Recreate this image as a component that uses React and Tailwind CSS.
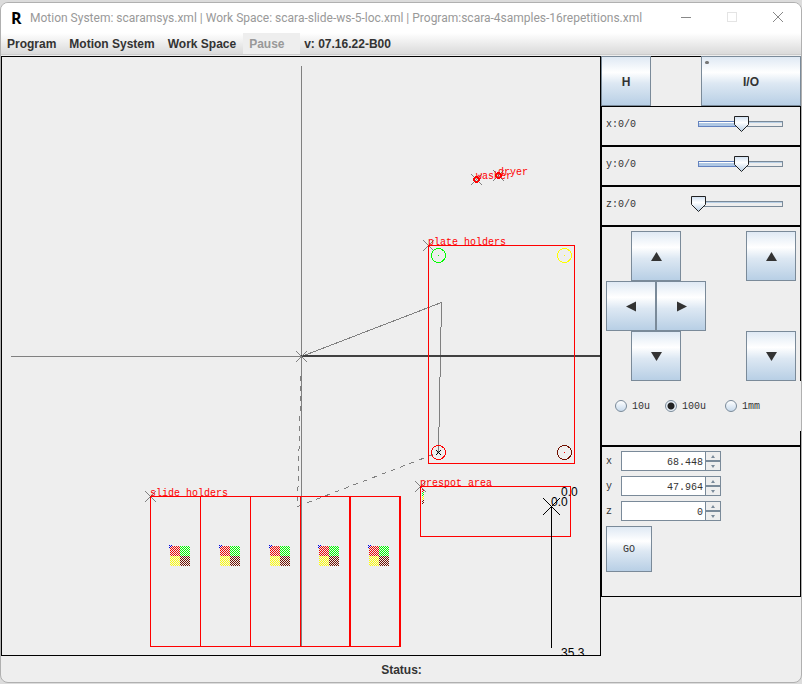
import React, { useState } from "react";

const MONO = "font-['Liberation_Mono',monospace] text-[10px] leading-3";
const BUTTON =
  "flex items-center justify-center border border-[#7a8a99] bg-[linear-gradient(#dfe9f4,#ffffff_32%,#dde8f3_55%,#b8cfe5)] text-[#333]";

function TitleBar() {
  return (
    <header className="flex h-[30px] items-center bg-white pl-[10px] pr-[17px]">
      <span className="w-[19px] font-['Open_Sans',sans-serif] text-base leading-5 font-bold text-black">R</span>
      <h1 className="flex-1 truncate font-['Roboto',sans-serif] text-xs text-[#999]">
        Motion System: scaramsys.xml | Work Space: scara-slide-ws-5-loc.xml | Program:scara-4samples-16repetitions.xml
      </h1>
      <div className="flex items-center gap-[34px]">
        <button type="button" aria-label="Minimize">
          <svg width="12" height="12" stroke="#888" fill="none"><path d="M1 5.500H11" /></svg>
        </button>
        <button type="button" aria-label="Maximize" disabled>
          <svg width="12" height="12" stroke="#e4e4e4" fill="none"><rect x="1.500" y="0.500" width="9" height="9" /></svg>
        </button>
        <button type="button" aria-label="Close">
          <svg width="12" height="12" stroke="#888" fill="none"><path d="M1 0L11 10M11 0L1 10" /></svg>
        </button>
      </div>
    </header>
  );
}

function MenuBar() {
  return (
    <nav className="flex h-[22px] items-stretch border-b border-[#ccc] bg-linear-to-b from-white to-[#dadada] text-xs font-bold text-[#333]">
      <button type="button" className="px-[6px]">Program</button>
      <button type="button" className="px-[7px]">Motion System</button>
      <button type="button" className="px-[6px]">Work Space</button>
      <button type="button" disabled className="ml-px w-[57px] bg-[#eee] pl-[6px] text-left text-[#999]">Pause</button>
      <span className="flex items-center pl-1">v: 07.16.22-B00</span>
    </nav>
  );
}

function Mark({ x, y, r = 5, color = "#808080" }) {
  return (
    <path
      d={`M${x - r} ${y - r}L${x + r} ${y + r}M${x + r} ${y - r}L${x - r} ${y + r}`}
      stroke={color}
      strokeLinecap="square"
      fill="none"
    />
  );
}

const SPOTS = [
  { id: "red", color: "#ee0000", dx: 0, dy: 0 },
  { id: "green", color: "#00ff00", dx: 10, dy: 0 },
  { id: "yellow", color: "#ffff00", dx: 0, dy: 10 },
  { id: "brown", color: "#701000", dx: 10, dy: 10 },
];

function Workspace() {
  return (
    <svg
      viewBox="2 57 598 598"
      className="block h-auto w-full"
      shapeRendering="crispEdges"
      role="img"
      aria-label="Work space"
    >
      <defs>
        {SPOTS.map((s) => (
          <pattern key={s.id} id={s.id} width="2" height="2" patternUnits="userSpaceOnUse">
            <rect width="1" height="1" fill={s.color} />
            <rect x="1" y="1" width="1" height="1" fill={s.color} />
          </pattern>
        ))}
      </defs>
      {[170, 220, 270, 319, 369].map((x) => (
        <g key={x} transform={`translate(${x} 546)`}>
          {SPOTS.map((s) => (
            <rect key={s.id} x={s.dx} y={s.dy} width="10" height="10" fill={`url(#${s.id})`} />
          ))}
          <path d="M-1 -1h1v1h-1zM1 -1h1v1h-1zM-1 1h1v1h-1zM0 0h1v1h-1z" fill="#0000e0" />
        </g>
      ))}
      <g transform="translate(422 489)">
        <rect width="2" height="3" fill="url(#red)" />
        <rect y="3" width="2" height="4" fill="url(#green)" />
        <rect y="7" width="2" height="4" fill="url(#yellow)" />
        <rect y="11" width="2" height="4" fill="url(#brown)" />
      </g>
      <g transform="translate(.5 .5)" fill="none">
        <g stroke="#808080">
          <path d="M301 65.500V646M10.500 356H301" />
          <path d="M301 356L441 302L438 452" />
          <path d="M301 356L297 506L438 452" strokeDasharray="5 5" />
        </g>
        <path d="M300 355.500H600" stroke="#404040" strokeWidth="2" />
        <Mark x={301} y={356} />
        <Mark x={150} y={496} />
        <Mark x={476} y={179} />
        <Mark x={498} y={175} />
        <Mark x={428} y={245} />
        <Mark x={420} y={486} />
        <g stroke="#ff0000">
          <rect x="428" y="245" width="146" height="218" />
          <rect x="420" y="486" width="150" height="50" />
          <path d="M150 496H400V646H150ZM200 496V646M250 496V646M300 496V646M349 496V646M350 496V646M399 496V646" />
          <circle cx="476" cy="179" r="2.700" strokeWidth="1.500" />
          <circle cx="498" cy="175" r="2.700" strokeWidth="1.500" />
          <circle cx="438" cy="452" r="7" />
        </g>
        <circle cx="438" cy="255" r="7" stroke="#00ff00" />
        <circle cx="564" cy="255" r="7" stroke="#ffff00" />
        <circle cx="564" cy="452" r="7" stroke="#701000" />
        <path d="M438 254.500v1" stroke="#00ff00" />
        <path d="M564 254.500v1" stroke="#ffff00" />
        <path d="M564 451.500v1" stroke="#ff0000" />
        <Mark x={438} y={452} r={2} color="#000" />
        <Mark x={551} y={506} r={8} color="#000" />
        <path d="M551 506V647" stroke="#000" />
      </g>
      <g fill="#ff0000" className="font-['Liberation_Mono',monospace] text-[10px]">
        <text x="476" y="179">washer</text>
        <text x="498" y="175">dryer</text>
        <text x="428" y="245">plate holders</text>
        <text x="420" y="486">prespot area</text>
        <text x="150" y="496">slide holders</text>
      </g>
      <g fill="#000" className="font-['Liberation_Sans',sans-serif] text-xs">
        <text x="561" y="496">0.0</text>
        <text x="551" y="506">0.0</text>
        <text x="561" y="657">35.3</text>
      </g>
    </svg>
  );
}

function AxisSlider({ axis, initial }) {
  const [value, setValue] = useState(initial);
  const at = 7 + Math.round(value * 0.86);
  return (
    <label className="flex h-10 items-center border border-black pr-[9px] pl-1">
      <span className={`${MONO} flex-1 pb-[2px]`}>{axis}:0/0</span>
      <span className="relative mb-1 block h-4 w-[100px]">
        <svg width="100" height="16" className="block">
          <defs>
            <linearGradient id={`thumb-${axis}`} x2="0" y2="1">
              <stop offset="0" stopColor="#cfe0f2" />
              <stop offset=".4" stopColor="#fff" />
              <stop offset="1" stopColor="#b8cfe5" />
            </linearGradient>
          </defs>
          <rect x="7.500" y="5.500" width="84" height="5" fill="#eee" stroke="#7a8a99" />
          <path d="M8 6.500H91" stroke="#b8cfe5" />
          {value > 0 && (
            <>
              <rect x="7.500" y="5.500" width={at - 7} height="5" fill="#b0c8e4" stroke="#6382bf" />
              <path d={`M8 6.500H${at}`} stroke="#fff" />
            </>
          )}
          <path
            d={`M${at - 6.5} .5h14v8l-7 7l-7 -7z`}
            fill={`url(#thumb-${axis})`}
            stroke="#222"
          />
        </svg>
        <input
          type="range"
          min="0"
          max="100"
          value={value}
          onChange={(e) => setValue(Number(e.target.value))}
          className="absolute inset-0 h-4 w-full opacity-0"
        />
      </span>
    </label>
  );
}

const ARROWS = {
  up: "M5.500 1L11 10H0Z",
  down: "M0 1H11L5.500 10Z",
  left: "M10 0.500V10.500L0 5.500Z",
  right: "M1 0.500V10.500L11 5.500Z",
};

function JogButton({ dir, label }) {
  return (
    <button type="button" aria-label={label} className={`${BUTTON} size-[50px]`}>
      <svg width="11" height="11" fill="#333"><path d={ARROWS[dir]} /></svg>
    </button>
  );
}

function Radio({ label, width, step, setStep }) {
  return (
    <label className={`${MONO} ${width} flex items-center gap-[5px]`}>
      <input
        type="radio"
        name="step"
        checked={step === label}
        onChange={() => setStep(label)}
        className="size-3 appearance-none rounded-full border border-[#7a8a99] bg-linear-to-b from-white to-[#c8daec] checked:bg-[radial-gradient(circle,#222_0_3px,#e8f0f8_4px)]"
      />
      <span className="pt-[2px]">{label}</span>
    </label>
  );
}

function JogPanel() {
  const [step, setStep] = useState("100u");
  return (
    <section className="h-[220px] border border-black pt-1 pl-1">
      <div className="flex justify-between pr-1">
        <div className="flex flex-col items-center">
          <JogButton dir="up" label="Y plus" />
          <div className="flex">
            <JogButton dir="left" label="X minus" />
            <JogButton dir="right" label="X plus" />
          </div>
          <JogButton dir="down" label="Y minus" />
        </div>
        <div className="flex flex-col justify-between">
          <JogButton dir="up" label="Z up" />
          <JogButton dir="down" label="Z down" />
        </div>
      </div>
      <div className="-mr-px flex h-[50px] bg-[#eee] pl-[9px]">
        <Radio label="10u" width="w-[50px]" step={step} setStep={setStep} />
        <Radio label="100u" width="w-[60px]" step={step} setStep={setStep} />
        <Radio label="1mm" width="w-[50px]" step={step} setStep={setStep} />
      </div>
    </section>
  );
}

function Spinner({ axis, initial }) {
  const [value, setValue] = useState(initial);
  const nudge = (d) => setValue(String(Math.round((Number(value) + d) * 1000) / 1000));
  const step = "flex h-[10px] w-4 items-center justify-center border border-[#7a8a99]";
  return (
    <div className="flex h-5 items-center">
      <label htmlFor={`goto-${axis}`} className={`${MONO} w-[15px] pt-px`}>{axis}</label>
      <input
        id={`goto-${axis}`}
        value={value}
        onChange={(e) => setValue(e.target.value)}
        className={`${MONO} h-5 w-[84px] border-y border-l border-[#7a8a99] bg-white pt-[3px] pr-[2px] text-right`}
      />
      <div>
        <button type="button" aria-label={`Increase ${axis}`} className={step} onClick={() => nudge(1)}>
          <svg width="4" height="3" fill="#7a8a99"><path d="M2 0L4 3H0Z" /></svg>
        </button>
        <button type="button" aria-label={`Decrease ${axis}`} className={step} onClick={() => nudge(-1)}>
          <svg width="4" height="3" fill="#7a8a99"><path d="M0 0H4L2 3Z" /></svg>
        </button>
      </div>
    </div>
  );
}

function GotoPanel() {
  return (
    <section className="flex h-[151px] flex-col gap-[5px] border border-black p-1">
      <Spinner axis="x" initial="68.448" />
      <Spinner axis="y" initial="47.964" />
      <Spinner axis="z" initial="0" />
      <button type="button" className={`${BUTTON} ${MONO} size-[46px] pt-[2px]`}>GO</button>
    </section>
  );
}

export default function App() {
  return (
    <div className="flex min-h-screen flex-col bg-[#dcdcdc] pt-[2px] pb-px font-['Liberation_Sans',sans-serif] text-[#333]">
      <div className="flex flex-1 flex-col overflow-hidden rounded-lg border border-[#b0b0b0] bg-[#eee]">
        <TitleBar />
        <MenuBar />
        <main className="flex items-start pt-px">
          <div className="min-w-0 flex-1 border border-black">
            <Workspace />
          </div>
          <aside className="w-[200px] shrink-0">
            <div className="flex h-[50px] justify-between">
              <button type="button" className={`${BUTTON} w-[50px] pt-[2px] text-xs font-bold`}>H</button>
              <div className="flex-1 border-t border-black" />
              <button type="button" className={`${BUTTON} relative w-[100px] pt-[2px] text-xs font-bold`}>
                <span className="absolute top-1 left-[3px] h-[3px] w-1 rounded-full bg-[#777]" />
                I/O
              </button>
            </div>
            <AxisSlider axis="x" initial={50} />
            <AxisSlider axis="y" initial={50} />
            <AxisSlider axis="z" initial={0} />
            <JogPanel />
            <GotoPanel />
          </aside>
        </main>
        <footer className="flex flex-1 items-center justify-center pt-px pl-px text-xs font-bold">Status:</footer>
      </div>
    </div>
  );
}
